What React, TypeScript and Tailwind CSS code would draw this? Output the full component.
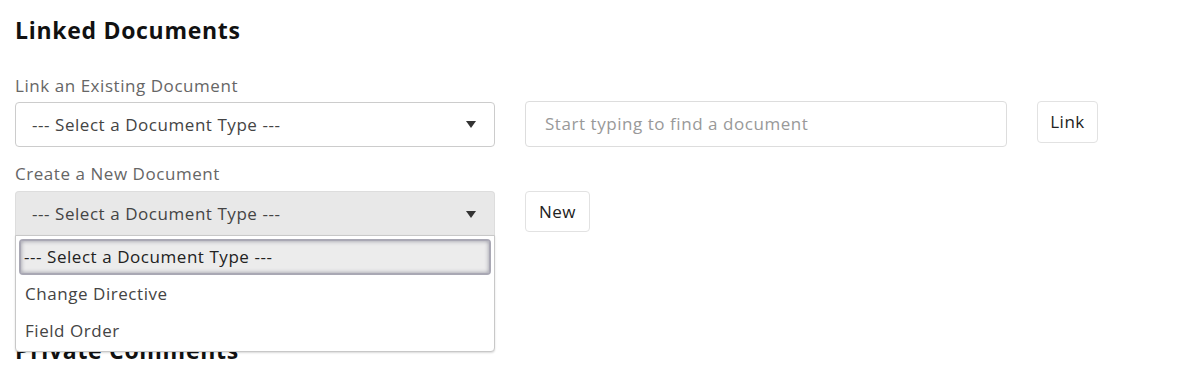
import React from 'react';

const font = { fontFamily: '"Open Sans", "Noto Sans", sans-serif' };

const Caret: React.FC = () => (
  <svg width="10" height="7" viewBox="0 0 10 7" className="shrink-0">
    <path d="M0 0 L10 0 L5 7 Z" fill="#333" />
  </svg>
);

export default function App() {
  return (
    <div className="relative w-[1193px] h-[383px] overflow-hidden bg-white" style={font}>
      <div className="px-[15px] pt-[14px]">
        <h2 className="text-[23px] font-bold text-[#111] leading-[32px] tracking-[0.7px]">Linked Documents</h2>

        <div className="mt-[29px] text-[17px] text-[#666] leading-[22px] tracking-[0.55px]">Link an Existing Document</div>
        <div className="mt-[5px] flex items-start text-[17px] tracking-[0.55px]">
          <div className="w-[480px] h-[45px] rounded-[4px] border border-[#ccc] bg-white flex items-center justify-between pl-[16px] pr-[18px] text-[#444]">
            <span>--- Select a Document Type ---</span>
            <Caret />
          </div>
          <div className="ml-[30px] -mt-px w-[482px] h-[46px] rounded-[4px] border border-[#ddd] bg-white flex items-center pl-[19px] text-[#999]">
            Start typing to find a document
          </div>
          <button className="ml-[30px] -mt-px h-[42px] w-[61px] rounded-[4px] border border-[#e2e2e2] bg-white text-[#222]">Link</button>
        </div>

        <div className="mt-[16px] text-[17px] text-[#666] leading-[22px] tracking-[0.55px]">Create a New Document</div>
        <div className="mt-[6px] flex items-start text-[17px] tracking-[0.55px]">
          <div className="relative w-[480px]">
            <div className="h-[45px] rounded-t-[4px] border border-b-0 border-[#ddd] bg-[#e8e8e8] flex items-center justify-between pl-[16px] pr-[18px] text-[#444]">
              <span>--- Select a Document Type ---</span>
              <Caret />
            </div>
            <div className="absolute z-10 left-0 top-[44px] w-[480px] h-[117px] bg-white border border-[#c8c8c8] rounded-b-[4px] shadow-[0_1px_2px_rgba(0,0,0,0.15)] px-[3px] pt-[3px]">
              <div className="h-[36px] rounded-[4px] bg-[#ececec] border-[2px] border-[#a9a8b4] shadow-[inset_0_0_4px_rgba(90,90,110,0.6)] flex items-center pl-[3px] text-[#222]">
                --- Select a Document Type ---
              </div>
              <div className="h-[37px] flex items-center pl-[6px] text-[#444]">Change Directive</div>
              <div className="h-[37px] flex items-center pl-[6px] text-[#444]">Field Order</div>
            </div>
          </div>
          <button className="ml-[30px] h-[41px] w-[65px] rounded-[4px] border border-[#e2e2e2] bg-white text-[#222]">New</button>
        </div>

        <h2 className="mt-[98px] text-[23px] font-bold text-[#111] leading-[32px] tracking-[0.7px]">Private Comments</h2>
        <div className="mt-[12px] text-[17px] text-[#223] leading-[22px] tracking-[0.55px]">These comments are only visible to you and your team</div>
      </div>
    </div>
  );
}
